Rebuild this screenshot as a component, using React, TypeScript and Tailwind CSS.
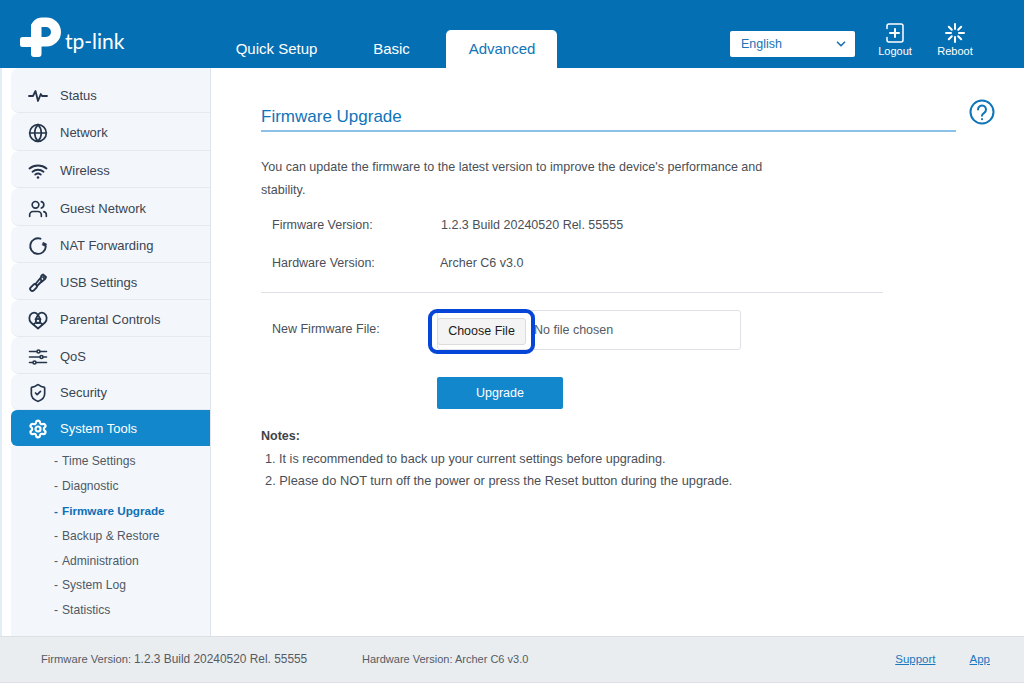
import React from "react";
import { Globe, Users, ShieldCheck, Settings, ChevronDown } from "lucide-react";

const ic = "w-[20px] h-[20px] text-[#25344a]";
const Pulse = () => (
  <svg viewBox="0 0 20 20" className={ic} fill="none" stroke="currentColor" strokeWidth="1.8" strokeLinejoin="round" strokeLinecap="round">
    <path d="M1 10h4l2.500-5 2.500 10 2.800-7 1.200 2h5" />
  </svg>
);
const WifiIcon = () => (
  <svg viewBox="0 0 20 20" className={ic} fill="none" stroke="currentColor" strokeWidth="1.900" strokeLinecap="round">
    <path d="M1.500 7.500c4.800-4 12.200-4 17 0" />
    <path d="M4.500 10.700c3.200-2.600 7.800-2.600 11 0" />
    <path d="M7.300 13.600c1.600-1.200 3.800-1.200 5.400 0" />
    <circle cx="10" cy="16.500" r="1.300" fill="currentColor" stroke="none" />
  </svg>
);
const Nat = () => (
  <svg viewBox="0 0 20 20" className={ic} fill="none" stroke="currentColor" strokeWidth="1.900" strokeLinecap="round">
    <path d="M12.500 2.700A7.800 7.800 0 1 0 17.800 10.500" />
    <path d="M15.500 6.500l3 1.500-1 2.500-3-1.500z" fill="currentColor" strokeWidth="0.800" />
  </svg>
);
const UsbIcon = () => (
  <svg viewBox="0 0 20 20" className={ic} fill="none" stroke="currentColor" strokeWidth="1.900" strokeLinecap="round" strokeLinejoin="round">
    <path d="M2.800 14.300l2.500-2.500a2.100 2.100 0 0 1 3 3l-2.500 2.500a2.100 2.100 0 0 1-3-3z" />
    <path d="M7.500 11l4.500-5.500" />
    <path d="M9 13l4.500-4.500" />
    <path d="M12.500 6l1-3.500 1.500-1 3 2.500-1 2-3 2.500z" />
    <path d="M15 4l1 1" />
  </svg>
);
const Parental = () => (
  <svg viewBox="0 0 20 20" className={ic} fill="none" stroke="currentColor" strokeWidth="1.800" strokeLinejoin="round" strokeLinecap="round">
    <path d="M10 18.500L3 12.500C.5 10 .8 5 4 3.300 6.300 2.200 8.800 3 10 5c1.200-2 3.700-2.800 6-1.700 3.200 1.700 3.500 6.700 1 9.200z" />
    <path d="M10 5L7.500 9.500M10 5l2.500 4.500" />
    <circle cx="10" cy="11" r="2.200" />
    <path d="M5.500 14.500c1-1.500 2.500-1.800 4.500-1.800s3.500.3 4.500 1.800" />
  </svg>
);
const Qos = () => (
  <svg viewBox="0 0 20 20" className={ic} fill="none" stroke="currentColor" strokeWidth="1.600" strokeLinecap="round">
    <path d="M1.500 4.500h7M12.500 4.500h6M1.500 10h10M15.500 10h3M1.500 15.500h3M8.500 15.500h10" />
    <circle cx="10.500" cy="4.500" r="1.500" />
    <circle cx="13.500" cy="10" r="1.500" />
    <circle cx="6.500" cy="15.500" r="1.500" />
  </svg>
);

const items: [string, React.ReactNode, string][] = [
  ["Status", <Pulse />, "h-[45px] pt-[12px]"],
  ["Network", <Globe className={ic} strokeWidth={2} />, "h-[38px] pt-[2px]"],
  ["Wireless", <WifiIcon />, "h-[37px] pt-[4px]"],
  ["Guest Network", <Users className={ic} strokeWidth={2} />, "h-[38px] pt-[4px]"],
  ["NAT Forwarding", <Nat />, "h-[37px] pt-[4px]"],
  ["USB Settings", <UsbIcon />, "h-[37px] pt-[4px]"],
  ["Parental Controls", <Parental />, "h-[37px] pt-[4px]"],
  ["QoS", <Qos />, "h-[37px] pt-[4px]"],
  ["Security", <ShieldCheck className={ic} strokeWidth={2} />, "h-[36px] pt-[3px]"],
];
const subs = ["Time Settings", "Diagnostic", "Firmware Upgrade", "Backup & Restore", "Administration", "System Log", "Statistics"];

export default function App() {
  return (
    <div className="w-[1024px] h-[683px] flex flex-col overflow-hidden bg-white text-[12.500px] text-[#4a4f57] font-['Liberation_Sans',Arial,sans-serif]">
      <header className="h-[68px] shrink-0 bg-[#056fb3] flex text-white">
        <div className="w-[236px] shrink-0 flex items-start pl-[20px] pt-[17px] gap-[3px]">
          <svg viewBox="0 0 42 40" className="w-[42px] h-[40px]" fill="#fff">
            <rect x="0" y="20" width="22" height="10" rx="2.500" />
            <rect x="11" y="6" width="10.500" height="34" rx="3" />
            <path d="M11 11C11 5 16 .5 22 .5h4.500a14.500 14.500 0 0 1 0 29H21v-9.500h5a5 5 0 0 0 0-10h-5V11z" />
          </svg>
          <span className="font-['Lato',sans-serif] text-[21px] leading-none mt-[13px]">tp-link</span>
        </div>
        <nav className="flex items-end text-[15px] whitespace-nowrap">
          <div className="w-[81px] h-[38px] flex items-center justify-center">Quick Setup</div>
          <div className="w-[37px] ml-[56px] h-[38px] flex items-center justify-center">Basic</div>
          <div className="w-[111px] ml-[36px] h-[38px] pl-[1px] flex items-center justify-center bg-white text-[#0f74b8] rounded-t-[5px]">Advanced</div>
        </nav>
        <div className="ml-[173px] mt-[31px] w-[125px] h-[26px] bg-white rounded-[2px] flex items-center justify-between pl-[11px] pr-[7px] text-[#2273b5]">
          English
          <ChevronDown className="w-[14px] h-[14px]" strokeWidth={3} />
        </div>
        <div className="w-[40px] ml-[20px] mt-[23px] flex flex-col items-center text-[11px] leading-none gap-[3px]">
          <svg viewBox="0 0 20 20" className="w-[20px] h-[20px]" fill="none" stroke="#fff" strokeWidth="1.500" strokeLinecap="round">
            <path d="M2 5.500V3a2 2 0 0 1 2-2h12a2 2 0 0 1 2 2v14a2 2 0 0 1-2 2H4a2 2 0 0 1-2-2v-2.500" />
            <path d="M5 10h9M10 6v8" strokeWidth="2" />
          </svg>
          Logout
        </div>
        <div className="w-[40px] ml-[20px] mt-[23px] flex flex-col items-center text-[11px] leading-none gap-[3px]">
          <svg viewBox="0 0 20 20" className="w-[20px] h-[20px]" fill="none" stroke="#fff" strokeWidth="2" strokeLinecap="round">
            <path d="M10 1v5M10 14v5M1 10h5M14 10h5M3.800 3.800l3 3M13.200 13.200l3 3M16.200 3.800l-3 3M6.800 13.200l-3 3" />
          </svg>
          Reboot
        </div>
      </header>

      <div className="flex-1 flex min-h-0">
        <aside className="w-[211px] shrink-0 pl-[9px] border-l-2 border-l-[#e1eef8] border-r border-r-[#dfe5ea] flex flex-col text-[13px]">
          {items.map(([label, icon, h]) => (
            <div key={label} className={`${h} shrink-0 flex items-center pl-[17px] gap-[12px] bg-[#f3f7fb] border-b border-[#e6eaee] rounded-l-[8px] text-[#3a4452]`}>
              <span className="w-[20px] flex justify-center">{icon}</span>
              {label}
            </div>
          ))}
          <div className="h-[36px] shrink-0 pt-[1px] flex items-center pl-[17px] gap-[12px] bg-[#1387cc] text-white rounded-l-[6px]">
            <Settings className="w-[20px] h-[20px]" strokeWidth={2.6} />
            System Tools
          </div>
          <ul className="flex-1 pt-[3px] pl-[43px] bg-[#f3f7fb] text-[12.100px] text-[#4f5965]">
            {subs.map((s) => (
              <li key={s} className={`h-[24.800px] flex items-center ${s === "Firmware Upgrade" ? "font-bold text-[11.700px] text-[#0f6fb4]" : ""}`}>
                <span className="w-[8px]">-</span>
                {s}
              </li>
            ))}
          </ul>
        </aside>

        <main className="flex-1 relative pl-[50px] pt-[37px]">
          <h1 className="w-[695px] h-[27px] border-b-2 border-b-[#8cc0e6] text-[17px] leading-[23px] text-[#0f74b8]">Firmware Upgrade</h1>
          <svg viewBox="0 0 26 26" className="absolute left-[758px] top-[31px] w-[26px] h-[26px]" fill="none" stroke="#0f74b8" strokeWidth="2" strokeLinecap="round">
            <circle cx="13" cy="13" r="11.500" />
            <path d="M9 10.500a4 4 0 1 1 6.200 3.300c-1.400.9-2.200 1.500-2.200 3" />
            <path d="M13 20v.2" />
          </svg>
          <p className="mt-[24px] w-[520px] leading-[23px] text-[12.550px]">You can update the firmware to the latest version to improve the device's performance and stability.</p>
          <div className="mt-[13px] pl-[11px] w-[622px] border-b border-[#dde1e5] pb-[19px]">
            <div className="flex h-[20px] items-center"><span className="w-[169px]">Firmware Version:</span>1.2.3 Build 20240520 Rel. 55555</div>
            <div className="flex h-[20px] items-center mt-[18px]"><span className="w-[168px]">Hardware Version:</span>Archer C6 v3.0</div>
          </div>
          <div className="mt-[17px] pl-[11px] flex items-center h-[40px]">
            <span className="w-[165px] -mt-[1px]">New Firmware File:</span>
            <div className="relative w-[304px] h-[40px] border border-[#dfe1e8] rounded-[3px] flex items-center">
              <div className="absolute left-[-10px] top-[-2px] w-[107px] h-[45px] border-[4px] border-[#0546d8] rounded-[9px] flex items-center justify-center">
                <div className="w-[89px] h-[27px] bg-[#f4f4f4] border border-[#dcdcdc] rounded-[3px] flex items-center justify-center text-[#1c1c1c]">Choose File</div>
              </div>
              <span className="ml-[96px] text-[#555b63]">No file chosen</span>
            </div>
          </div>
          <button className="block mt-[27px] ml-[176px] w-[126px] h-[32px] bg-[#1387cc] rounded-[2px] text-white">Upgrade</button>
          <h2 className="mt-[19px] font-bold leading-[17px] text-[#3f4247]">Notes:</h2>
          <ol className="mt-[4px] pl-[4px] leading-[21px]">
            <li className="text-[12.650px]">1. It is recommended to back up your current settings before upgrading.</li>
            <li className="text-[12.830px]">2. Please do NOT turn off the power or press the Reset button during the upgrade.</li>
          </ol>
        </main>
      </div>

      <footer className="h-[47px] shrink-0 bg-[#eaedf0] border-t border-b border-[#dcdfe3] flex items-center pl-[41px] pr-[34px] text-[11.500px] text-[#555b63]">
        <span className="w-[321px] flex">
          <span className="w-[93px] text-[11.200px]">Firmware Version:</span>
          <span className="text-[11.900px]">1.2.3 Build 20240520 Rel. 55555</span>
        </span>
        <span className="text-[11px]">Hardware Version: Archer C6 v3.0</span>
        <a className="ml-auto text-[#1a78bd] underline">Support</a>
        <a className="ml-[34px] text-[#1a78bd] underline">App</a>
      </footer>
    </div>
  );
}
